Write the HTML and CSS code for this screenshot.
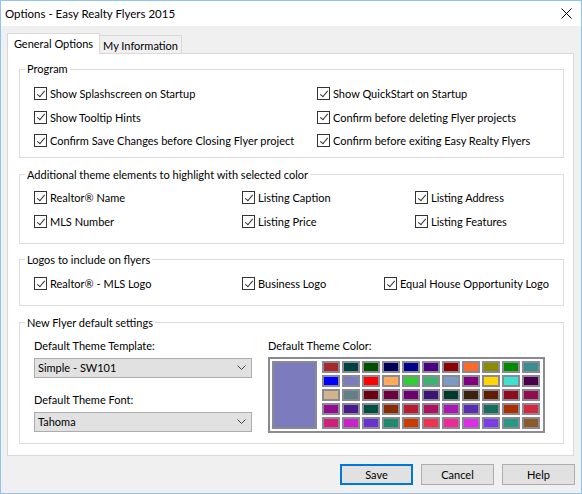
FILE: index.html
```html
<!DOCTYPE html>
<html lang="en">
<head>
    <meta charset="UTF-8">
    <title>Options - Easy Realty Flyers 2015</title>
    <link rel="stylesheet" href="styles.css">
</head>
<body>
<div class="window">
    <div class="titlebar">
        <span class="title">Options - Easy Realty Flyers 2015</span>
        <svg class="close" width="11" height="11" viewBox="0 0 11 11"><path d="M0.5 0.5L10.5 10.5M10.5 0.5L0.5 10.5" stroke="#000" stroke-width="1"/></svg>
    </div>

    <div class="tabs">
        <div class="tab active">General Options</div>
        <div class="tab">My Information</div>
    </div>

    <div class="panel">
        <fieldset class="group program">
            <legend>Program</legend>
            <div class="rows cols-program">
                <label class="check"><span class="box"></span>Show Splashscreen on Startup</label>
                <label class="check"><span class="box"></span>Show QuickStart on Startup</label>
                <label class="check"><span class="box"></span>Show Tooltip Hints</label>
                <label class="check"><span class="box"></span>Confirm before deleting Flyer projects</label>
                <label class="check"><span class="box"></span>Confirm Save Changes before Closing Flyer project</label>
                <label class="check"><span class="box"></span>Confirm before exiting Easy Realty Flyers</label>
            </div>
        </fieldset>

        <fieldset class="group theme">
            <legend>Additional theme elements to highlight with selected color</legend>
            <div class="rows cols-theme">
                <label class="check"><span class="box"></span>Realtor® Name</label>
                <label class="check"><span class="box"></span>Listing Caption</label>
                <label class="check"><span class="box"></span>Listing Address</label>
                <label class="check"><span class="box"></span>MLS Number</label>
                <label class="check"><span class="box"></span>Listing Price</label>
                <label class="check"><span class="box"></span>Listing Features</label>
            </div>
        </fieldset>

        <fieldset class="group logos">
            <legend>Logos to include on flyers</legend>
            <div class="rows cols-logos">
                <label class="check"><span class="box"></span>Realtor® - MLS Logo</label>
                <label class="check"><span class="box"></span>Business Logo</label>
                <label class="check"><span class="box"></span>Equal House Opportunity Logo</label>
            </div>
        </fieldset>

        <fieldset class="group defaults">
            <legend>New Flyer default settings</legend>
            <div class="defaults-body">
                <div class="selects">
                    <div class="field-label">Default Theme Template:</div>
                    <div class="select">
                        <span>Simple - SW101</span>
                        <svg width="9" height="6" viewBox="0 0 9 6"><polyline points="0.5,0.5 4.5,4.5 8.5,0.5" fill="none" stroke="#444" stroke-width="1"/></svg>
                    </div>
                    <div class="field-label second">Default Theme Font:</div>
                    <div class="select">
                        <span>Tahoma</span>
                        <svg width="9" height="6" viewBox="0 0 9 6"><polyline points="0.5,0.5 4.5,4.5 8.5,0.5" fill="none" stroke="#444" stroke-width="1"/></svg>
                    </div>
                </div>
                <div class="colors">
                    <div class="field-label">Default Theme Color:</div>
                    <div class="palette">
                        <div class="current"></div>
                        <div class="swatches">
                            <div class="sw" style="background:#a52a2a"></div>
                            <div class="sw" style="background:#004040"></div>
                            <div class="sw" style="background:#005000"></div>
                            <div class="sw" style="background:#00005a"></div>
                            <div class="sw" style="background:#00008b"></div>
                            <div class="sw" style="background:#4b0082"></div>
                            <div class="sw" style="background:#8b0000"></div>
                            <div class="sw" style="background:#ff6a28"></div>
                            <div class="sw" style="background:#8b8b00"></div>
                            <div class="sw" style="background:#008b00"></div>
                            <div class="sw" style="background:#398e8e"></div>

                            <div class="sw" style="background:#0000ff"></div>
                            <div class="sw" style="background:#7b7bc0"></div>
                            <div class="sw" style="background:#ff0000"></div>
                            <div class="sw" style="background:#ffa95a"></div>
                            <div class="sw" style="background:#32cd32"></div>
                            <div class="sw" style="background:#3cb371"></div>
                            <div class="sw" style="background:#7b9bc4"></div>
                            <div class="sw" style="background:#800080"></div>
                            <div class="sw" style="background:#ffd700"></div>
                            <div class="sw" style="background:#40e0d0"></div>
                            <div class="sw" style="background:#4b004b"></div>

                            <div class="sw" style="background:#d2b48c"></div>
                            <div class="sw" style="background:#638087"></div>
                            <div class="sw" style="background:#6b0010"></div>
                            <div class="sw" style="background:#6b003c"></div>
                            <div class="sw" style="background:#6e0070"></div>
                            <div class="sw" style="background:#3c1475"></div>
                            <div class="sw" style="background:#003a2c"></div>
                            <div class="sw" style="background:#3c220a"></div>
                            <div class="sw" style="background:#621c00"></div>
                            <div class="sw" style="background:#8e0c1e"></div>
                            <div class="sw" style="background:#940c4e"></div>

                            <div class="sw" style="background:#920c92"></div>
                            <div class="sw" style="background:#481a8e"></div>
                            <div class="sw" style="background:#005040"></div>
                            <div class="sw" style="background:#8b2c00"></div>
                            <div class="sw" style="background:#b81c30"></div>
                            <div class="sw" style="background:#b01060"></div>
                            <div class="sw" style="background:#aa18b4"></div>
                            <div class="sw" style="background:#5a2cb4"></div>
                            <div class="sw" style="background:#146e5a"></div>
                            <div class="sw" style="background:#aa3000"></div>
                            <div class="sw" style="background:#d22840"></div>

                            <div class="sw" style="background:#d2207a"></div>
                            <div class="sw" style="background:#c822c8"></div>
                            <div class="sw" style="background:#6a30d0"></div>
                            <div class="sw" style="background:#208a6e"></div>
                            <div class="sw" style="background:#cc3c00"></div>
                            <div class="sw" style="background:#f03250"></div>
                            <div class="sw" style="background:#f02898"></div>
                            <div class="sw" style="background:#e02ce8"></div>
                            <div class="sw" style="background:#7c3ce8"></div>
                            <div class="sw" style="background:#289a82"></div>
                            <div class="sw" style="background:#8c5a28"></div>
                        </div>
                    </div>
                </div>
            </div>
        </fieldset>
    </div>

    <div class="buttons">
        <button class="btn default">Save</button>
        <button class="btn">Cancel</button>
        <button class="btn">Help</button>
    </div>
</div>
</body>
</html>
```

FILE: styles.css
```css
* {
    box-sizing: border-box;
}

body {
    margin: 0;
    font-family: Lato, "Liberation Sans", sans-serif;
    font-size: 11px;
    color: #000;
    background: #f0f0f0;
}

.window {
    width: 582px;
    height: 494px;
    border: 1px solid #8ec4f2;
    background: #f0f0f0;
}

/* title bar */
.titlebar {
    height: 25px;
    background: #fff;
    display: flex;
    align-items: center;
    justify-content: space-between;
    padding: 0 9px 0 4px;
}

.title {
    font-size: 11.5px;
}

/* tabs */
.tabs {
    display: flex;
    align-items: flex-end;
    margin: 7px 0 0 6px;
}

.tab {
    border: 1px solid #d9d9d9;
    border-bottom: none;
    text-align: center;
    white-space: nowrap;
}

.tab.active {
    height: 21px;
    width: 93px;
    background: #fff;
    margin-bottom: -1px;
    position: relative;
    z-index: 1;
    line-height: 19px;
}

.tab:not(.active) {
    height: 18px;
    width: 82px;
    border-left: none;
    background: #f0f0f0;
    line-height: 19px;
}

.panel {
    margin: 0 7px 0 6px;
    height: 403px;
    background: #fff;
    border: 1px solid #d9d9d9;
    padding: 0 9px 0 11px;
}

/* group boxes */
.group {
    margin: 9px 0 0;
    border: 1px solid #dcdcdc;
    padding: 0 8px 0 14px;
    min-width: 0;
}

.group legend {
    padding: 0 2px;
    margin-left: -9px;
    line-height: 14px;
}

.program {
    margin-top: 8px;
    padding-top: 6px;
    padding-bottom: 4px;
}

.theme {
    margin-top: 10px;
    padding-top: 4px;
    padding-bottom: 9px;
}

.logos {
    padding-top: 5px;
    padding-bottom: 9px;
}

.defaults {
    margin-top: 10px;
    padding-top: 8px;
    padding-bottom: 10px;
}

.rows {
    display: grid;
    grid-auto-rows: 24px;
}

.cols-program {
    grid-template-columns: 283px 1fr;
    grid-auto-rows: 23.5px;
}

.cols-theme {
    grid-template-columns: 208px 173px 1fr;
}

.cols-logos {
    grid-template-columns: 208px 142px 1fr;
}

.check {
    display: flex;
    align-items: center;
    white-space: nowrap;
}

.box {
    width: 13px;
    height: 13px;
    border: 1px solid #333;
    background: #fff;
    margin-right: 3px;
    position: relative;
    flex: none;
}

.box::after {
    content: "";
    position: absolute;
    left: 3.5px;
    top: 0.5px;
    width: 3px;
    height: 7px;
    border: solid #333;
    border-width: 0 1px 1px 0;
    transform: rotate(40deg);
}

/* new flyer defaults */
.defaults-body {
    display: flex;
    gap: 16px;
}

.selects {
    width: 218px;
}

.field-label {
    line-height: 16px;
}

.field-label.second {
    margin-top: 14px;
}

.select {
    margin-top: 4px;
    height: 20px;
    background: #e1e1e1;
    border: 1px solid #adadad;
    display: flex;
    align-items: center;
    justify-content: space-between;
    padding: 0 5px 0 3px;
}

.palette {
    margin-top: 3px;
    width: 277px;
    height: 76px;
    border: 2px solid #8a8a94;
    padding: 2px;
    display: flex;
    gap: 5px;
}

.current {
    width: 45px;
    height: 68px;
    background: #7b7bbd;
    border: 2px solid #8a8a94;
}

.swatches {
    display: grid;
    grid-template-columns: repeat(11, 18px);
    grid-auto-rows: 12px;
    gap: 2px;
}

.sw {
    border: 2px solid #8a8a94;
}

/* dialog buttons */
.buttons {
    display: flex;
    justify-content: flex-end;
    gap: 8px;
    margin: 8px 6px 0 0;
}

.btn {
    width: 73px;
    height: 21px;
    font-family: inherit;
    font-size: 11px;
    background: #e1e1e1;
    border: 1px solid #adadad;
    padding: 0;
}

.btn.default {
    border: 2px solid #0078d7;
}
```
